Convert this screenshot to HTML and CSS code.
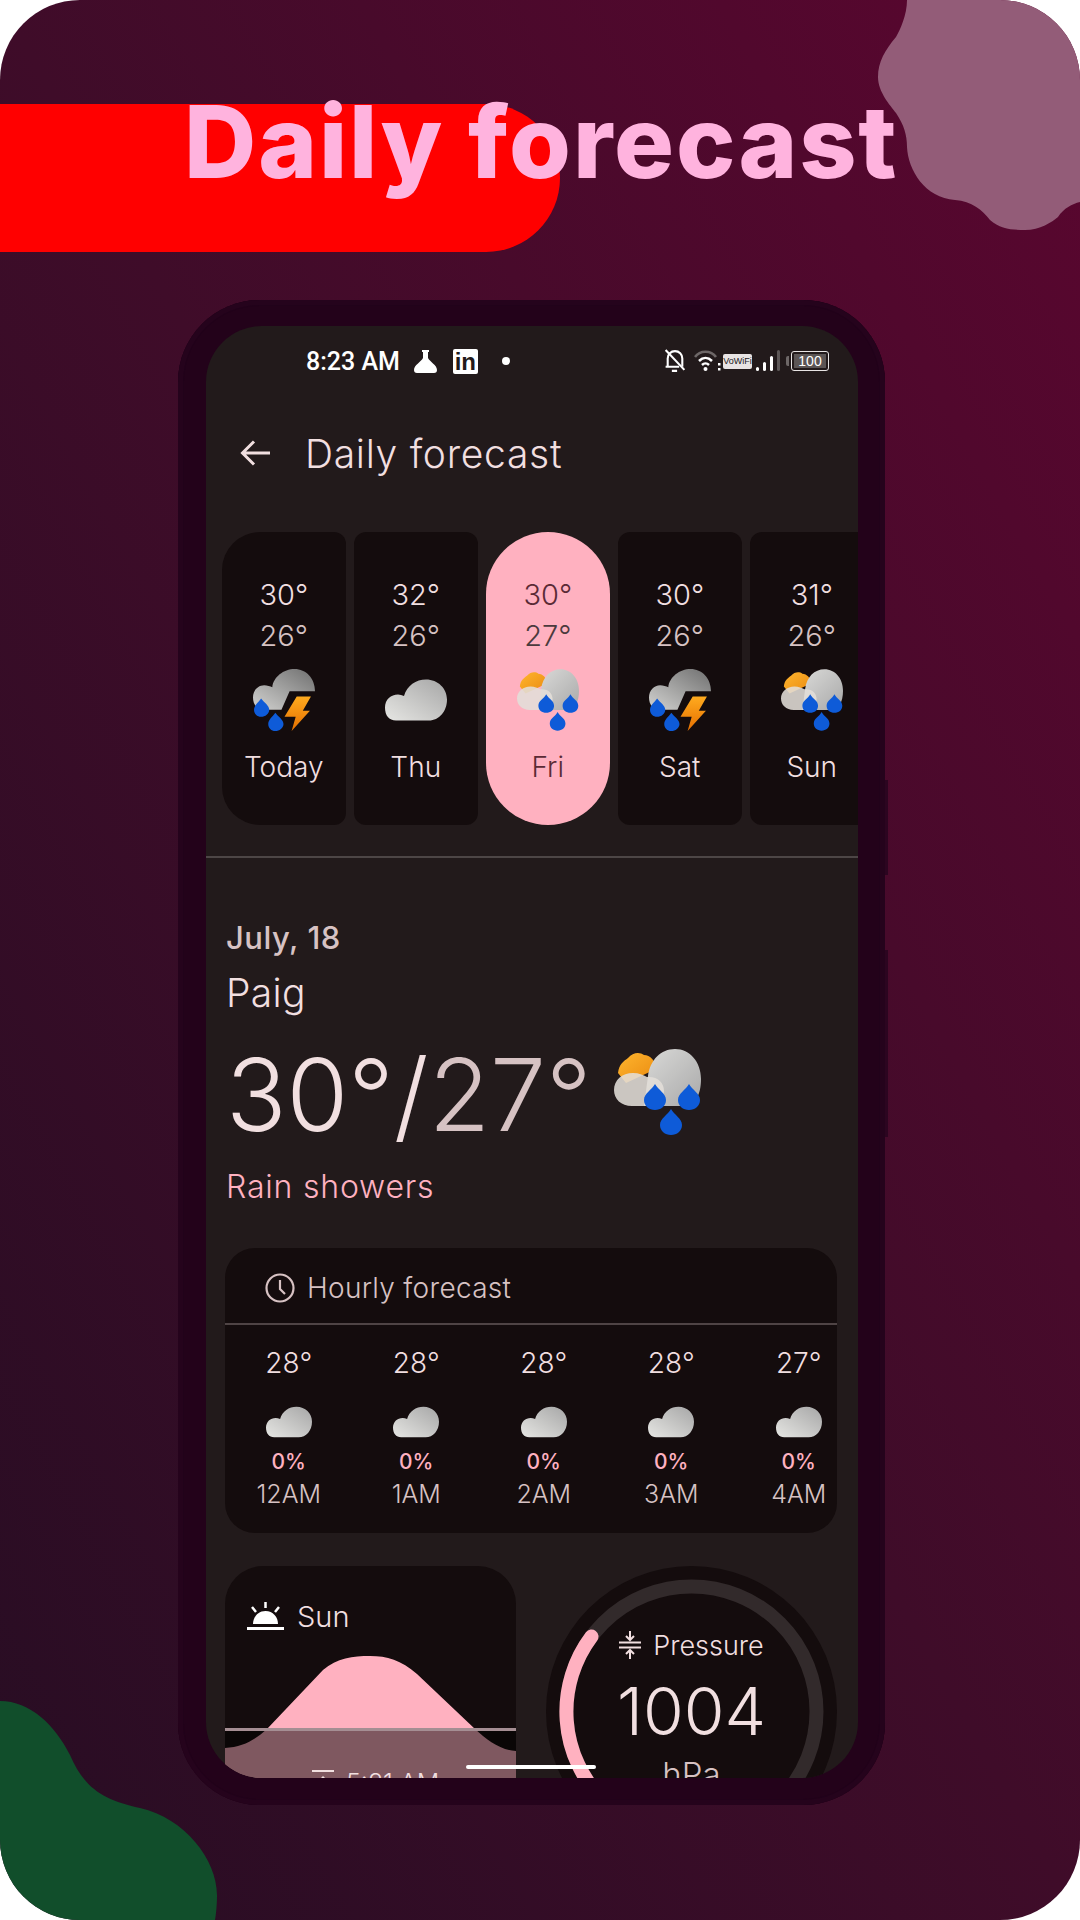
FILE: index.html
```html
<!DOCTYPE html>
<html>
    <head>
        <title>Daily forecast</title>
        <meta charset="UTF-8">
        <link rel="stylesheet" href="styles.css">
    </head>
    <body>
        <svg class="icon_defs">
            <defs>
                <linearGradient id="grad_light" x1="0" y1="1" x2="1" y2="0">
                    <stop offset="0" stop-color="#e6e6e3"/>
                    <stop offset="1" stop-color="#a6a6a6"/>
                </linearGradient>
                <linearGradient id="grad_dark" x1="0" y1="1" x2="1" y2="0">
                    <stop offset="0" stop-color="#d2d2d0"/>
                    <stop offset="1" stop-color="#6f6f6f"/>
                </linearGradient>
                <linearGradient id="grad_big" x1="0" y1="0" x2="1" y2="1">
                    <stop offset="0" stop-color="#dadad8"/>
                    <stop offset="1" stop-color="#a9a9a9"/>
                </linearGradient>
                <linearGradient id="grad_sun" x1="0" y1="0" x2="1" y2="1">
                    <stop offset="0" stop-color="#ffb52e"/>
                    <stop offset="1" stop-color="#e98a10"/>
                </linearGradient>
                <linearGradient id="grad_bolt" x1="0" y1="0" x2="0" y2="1">
                    <stop offset="0" stop-color="#ffab1f"/>
                    <stop offset="1" stop-color="#e56f00"/>
                </linearGradient>
                <symbol id="icon_cloud" viewBox="0 0 62 41">
                    <path fill="url(#grad_light)" d="M11 41C4 41 0 36 0 28C0 20 6 15 13 15C15 15 17 15.500 19 16.500C22 6 31 0 41 0C53 0 62 9 62 20C62 32 54 41 44 41Z"/>
                </symbol>
                <symbol id="icon_rain" viewBox="0 0 87 86">
                    <path fill="url(#grad_sun)" d="M4 24C5 15 10 12 14 9C19 3 26 3 30 6C36 6 42 12 42 20L12 34Z"/>
                    <path fill="url(#grad_big)" d="M34 27C36 11 47 0 61 0C76 0 87 13 87 30C87 46 81 57 70 57H30Z"/>
                    <path fill="#e2ded8" opacity=".88" d="M18 57C7 57 0 50 0 41C0 31 8 24 19 24C25 24 29 26 33 28C43 27 50 33 50 42C50 50 44 57 34 57Z"/>
                    <path fill="#0e5bd8" d="M41 35C38 41 30 44 30 51C30 57 35 61 41 61C47 61 52 57 52 51C52 44 44 41 41 35Z"/>
                    <path fill="#0e5bd8" d="M75 35C72 41 64 44 64 51C64 57 69 61 75 61C81 61 86 57 86 51C86 44 78 41 75 35Z"/>
                    <path fill="#0e5bd8" d="M57 60C54 66 46 69 46 76C46 82 51 86 57 86C63 86 68 82 68 76C68 69 60 66 57 60Z"/>
                </symbol>
                <symbol id="icon_storm" viewBox="0 0 61 61">
                    <path fill="url(#grad_dark)" d="M11 40C4 40 0 35 0 28C0 21 5 16 11 16C14 16 17 17 19 18C20 8 30 0 41 0C52 0 61 9 61 22H36L28 40Z"/>
                    <path fill="#0e5bd8" d="M8 29C5 33 1 36 1 40C1 44 4 47 8 47C12 47 16 44 16 40C16 36 11 33 8 29Z"/>
                    <path fill="#0e5bd8" d="M22 43C19 47 15 50 15 54C15 58 18 61 22 61C26 61 30 58 30 54C30 50 25 47 22 43Z"/>
                    <path fill="url(#grad_bolt)" d="M43 27H57L49 41H56L38 61L42 47H31Z"/>
                </symbol>
            </defs>
        </svg>

        <div class="slide">
            <svg class="blob_top" viewBox="878 0 202 230">
                <path fill="#935c78" d="M907 0C907 15 900 30 896 37C885 50 878 62 878 77C878 92 890 105 896 113C904 125 907 135 907 147C908 170 925 198 955 200C972 201 982 210 990 220C1000 229 1012 230 1025 230C1040 230 1052 222 1058 217C1064 208 1072 204 1080 202V0Z"/>
            </svg>
            <svg class="blob_bottom" viewBox="0 1701 217 219">
                <path fill="#114e2b" d="M0 1701C30 1701 55 1725 70 1755C85 1790 105 1800 140 1808C185 1818 217 1860 217 1895C217 1905 216 1915 215 1920H0Z"/>
            </svg>

            <div class="hero">
                <div class="hero_bar"></div>
                <h1 class="hero_title">Daily forecast</h1>
            </div>

            <div class="phone">
                <div class="side_btn side_btn_a"></div>
                <div class="side_btn side_btn_b"></div>
                <div class="screen">
                    <div class="status_bar">
                        <span class="status_time">8:23 AM</span>
                        <svg class="st_flask" viewBox="0 0 23 23"><path fill="#fff" d="M8 0H15V2H14V8C16 12 23 15 23 20C23 22 22 23 20 23H3C1 23 0 22 0 20C0 15 7 12 9 8V2H8Z"/></svg>
                        <span class="st_linkedin">in</span>
                        <span class="st_dot"></span>
                        <span class="status_gap"></span>
                        <svg class="st_bell" viewBox="1 1 20 23" fill="none" stroke="#fff" stroke-width="2"><path d="M4 18V10C4 6 7 3 11 3C15 3 18 6 18 10V18M2 18H15"/><path d="M2 2L20 21"/><path d="M8 22H13"/></svg>
                        <svg class="st_wifi" viewBox="0 0 27 22" fill="none"><path stroke="#6d6767" stroke-width="2.500" d="M1 7C6 0 17 0 22 7"/><path stroke="#fff" stroke-width="2.500" d="M5 11C9 7 14 7 18 11M8 15C10 13 13 13 15 15"/><circle cx="11.500" cy="19" r="2" fill="#fff"/><rect x="24" y="13" width="2.500" height="2.500" fill="#fff"/><rect x="24" y="18" width="2.500" height="2.500" fill="#fff"/></svg>
                        <span class="st_vowifi">VoWiFi</span>
                        <svg class="st_signal" viewBox="0 0 25 22"><rect x="1" y="17" width="3" height="4" rx="1.500" fill="#fff"/><rect x="8" y="12" width="3" height="9" rx="1.500" fill="#fff"/><rect x="15" y="6" width="3" height="15" rx="1.500" fill="#fff"/><rect x="22" y="0" width="3" height="21" rx="1.500" fill="#5d5757"/></svg>
                        <span class="st_battery"><span class="st_battery_num">100</span></span>
                    </div>

                    <div class="app_bar">
                        <svg class="back_icon" viewBox="0 0 30 26" fill="none" stroke="#f1dfe0" stroke-width="3"><path d="M30 13H3M14 1.500L2.500 13L14 24.500"/></svg>
                        <span class="app_title">Daily forecast</span>
                    </div>

                    <div class="days">
                        <div class="day day_first">
                            <div class="day_temp">30°</div>
                            <div class="day_temp day_low">26°</div>
                            <svg class="day_icon"><use href="#icon_storm"/></svg>
                            <div class="day_name">Today</div>
                        </div>
                        <div class="day">
                            <div class="day_temp">32°</div>
                            <div class="day_temp day_low">26°</div>
                            <svg class="day_icon day_icon_cloud"><use href="#icon_cloud"/></svg>
                            <div class="day_name">Thu</div>
                        </div>
                        <div class="day day_active">
                            <div class="day_temp">30°</div>
                            <div class="day_temp day_low">27°</div>
                            <svg class="day_icon"><use href="#icon_rain"/></svg>
                            <div class="day_name">Fri</div>
                        </div>
                        <div class="day">
                            <div class="day_temp">30°</div>
                            <div class="day_temp day_low">26°</div>
                            <svg class="day_icon"><use href="#icon_storm"/></svg>
                            <div class="day_name">Sat</div>
                        </div>
                        <div class="day">
                            <div class="day_temp">31°</div>
                            <div class="day_temp day_low">26°</div>
                            <svg class="day_icon"><use href="#icon_rain"/></svg>
                            <div class="day_name">Sun</div>
                        </div>
                    </div>

                    <div class="divider"></div>

                    <div class="summary">
                        <div class="sum_date">July, 18</div>
                        <div class="sum_place">Paig</div>
                        <div class="sum_temp">
                            <span class="sum_high">30°/</span><span class="sum_low">27°</span>
                            <svg class="sum_icon"><use href="#icon_rain"/></svg>
                        </div>
                        <div class="sum_cond">Rain showers</div>
                    </div>

                    <div class="hourly">
                        <div class="hourly_head">
                            <svg class="clock_icon" viewBox="0 0 30 30" fill="none" stroke="#d7c2c3" stroke-width="2.200"><circle cx="15" cy="15" r="13.500"/><path d="M15 7V16L20 21"/></svg>
                            <span>Hourly forecast</span>
                        </div>
                        <div class="hourly_row">
                            <div class="hour">
                                <div class="hour_temp">28°</div>
                                <svg class="hour_icon"><use href="#icon_cloud"/></svg>
                                <div class="hour_pop">0%</div>
                                <div class="hour_time">12AM</div>
                            </div>
                            <div class="hour">
                                <div class="hour_temp">28°</div>
                                <svg class="hour_icon"><use href="#icon_cloud"/></svg>
                                <div class="hour_pop">0%</div>
                                <div class="hour_time">1AM</div>
                            </div>
                            <div class="hour">
                                <div class="hour_temp">28°</div>
                                <svg class="hour_icon"><use href="#icon_cloud"/></svg>
                                <div class="hour_pop">0%</div>
                                <div class="hour_time">2AM</div>
                            </div>
                            <div class="hour">
                                <div class="hour_temp">28°</div>
                                <svg class="hour_icon"><use href="#icon_cloud"/></svg>
                                <div class="hour_pop">0%</div>
                                <div class="hour_time">3AM</div>
                            </div>
                            <div class="hour">
                                <div class="hour_temp">27°</div>
                                <svg class="hour_icon"><use href="#icon_cloud"/></svg>
                                <div class="hour_pop">0%</div>
                                <div class="hour_time">4AM</div>
                            </div>
                        </div>
                    </div>

                    <div class="bottom_row">
                        <div class="sun_card">
                            <div class="sun_head">
                                <svg class="sun_icon" viewBox="0 0 37 29"><path fill="#fff" d="M6 22C6 15 11 9 18.500 9C26 9 31 15 31 22Z"/><rect x="0" y="25" width="37" height="3" fill="#fff"/><path stroke="#fff" stroke-width="2.500" d="M18.500 0V6M5 5L9 10M32 5L28 10"/></svg>
                                <span>Sun</span>
                            </div>
                            <svg class="sun_chart" viewBox="0 0 291 207">
                                <path fill="#ffb1c0" d="M0 98C18 97 30 90 42 79L98 20C112 8 128 6 145 6C162 6 176 10 192 24L250 79C262 90 275 100 291 101V207H0Z"/>
                                <rect x="0" y="79" width="291" height="128" fill="#000" opacity=".5"/>
                                <rect x="0" y="78" width="291" height="3" fill="#a58e93"/>
                            </svg>
                            <div class="sun_time">
                                <svg class="rise_icon" viewBox="0 0 22 16"><rect x="0" y="0" width="22" height="2" fill="#f1dfe0"/><path fill="#f1dfe0" d="M11 6L17 12H5Z"/></svg>
                                <span>5:31 AM</span>
                            </div>
                        </div>
                        <div class="pressure">
                            <svg class="pressure_ring" viewBox="0 0 291 291" fill="none" stroke-width="14">
                                <circle cx="145.500" cy="145.500" r="125" stroke="#322a2b"/>
                                <path stroke="#ffb1c0" stroke-linecap="round" d="M57 234A125 125 0 0 1 45.500 70.500"/>
                            </svg>
                            <div class="pressure_head">
                                <svg class="pressure_icon" viewBox="0 0 22 28" fill="none" stroke="#f1dfe0" stroke-width="2"><path d="M0 11.500H22M0 16.500H22M11 0V8M7 5L11 9L15 5M11 28V20M7 23L11 19L15 23"/></svg>
                                <span>Pressure</span>
                            </div>
                            <div class="pressure_val">1004</div>
                            <div class="pressure_unit">hPa</div>
                        </div>
                    </div>

                    <div class="home_bar"></div>
                </div>
            </div>
        </div>
    </body>
</html>
```

FILE: styles.css
```css
html, body {
    margin: 0;
    padding: 0;
    background-color: #fff;
}
body {
    width: 1080px;
    height: 1920px;
    overflow: hidden;
    font-family: "Inter", "Noto Sans", sans-serif;
}
.icon_defs {
    position: absolute;
    width: 0;
    height: 0;
}
.slide {
    position: relative;
    width: 1080px;
    height: 1920px;
    border-radius: 80px;
    overflow: hidden;
    background: linear-gradient(to top right, #270d23, #3f0c29 50%, #5a062f);
}
.blob_top {
    position: absolute;
    right: 0;
    top: 0;
    width: 202px;
    height: 230px;
}
.blob_bottom {
    position: absolute;
    left: 0;
    bottom: 0;
    width: 217px;
    height: 219px;
}

.hero {
    position: relative;
    height: 300px;
}
.hero_bar {
    position: absolute;
    left: 0;
    top: 104px;
    width: 560px;
    height: 148px;
    border-radius: 0 74px 74px 0;
    background-color: #f00;
}
.hero_title {
    position: relative;
    margin: 0;
    padding: 82px 0 0 184px;
    font-size: 100px;
    line-height: 120px;
    font-weight: 800;
    letter-spacing: 1.900px;
    color: #ffb3de;
}

.phone {
    position: relative;
    box-sizing: border-box;
    width: 707px;
    height: 1505px;
    margin-left: 178px;
    padding: 26px 27px 27px 28px;
    border-radius: 82px;
    background-color: #23021a;
    box-shadow: inset 0 0 0 5px #25031c, inset 0 0 0 6px #21021a;
}
.side_btn {
    position: absolute;
    left: 707px;
    width: 3px;
    background-color: #2c0520;
}
.side_btn_a {
    top: 480px;
    height: 95px;
}
.side_btn_b {
    top: 650px;
    height: 187px;
}
.screen {
    position: relative;
    height: 1452px;
    border-radius: 56px;
    overflow: hidden;
    background-color: #221a1b;
}

.status_bar {
    display: flex;
    align-items: center;
    height: 70px;
    padding: 0 29px 0 100px;
    color: #fff;
}
.status_time {
    font-family: "Roboto", sans-serif;
    font-size: 25px;
    font-weight: 500;
}
.status_gap {
    flex: 1;
}
.st_flask {
    width: 23px;
    height: 23px;
    margin-left: 14px;
}
.st_linkedin {
    box-sizing: border-box;
    width: 25px;
    height: 25px;
    margin-left: 16px;
    border-radius: 2px;
    background-color: #fff;
    color: #221a1b;
    font-family: "Liberation Sans", sans-serif;
    font-size: 24px;
    line-height: 26px;
    font-weight: 700;
    text-align: center;
}
.st_dot {
    width: 8px;
    height: 8px;
    margin-left: 24px;
    border-radius: 50%;
    background-color: #fff;
}
.st_bell {
    width: 22px;
    height: 24px;
}
.st_wifi {
    width: 27px;
    height: 22px;
    margin-left: 8px;
}
.st_vowifi {
    width: 29px;
    height: 15px;
    margin-left: 2px;
    border-radius: 2px;
    background-color: #e8e4e4;
    color: #221a1b;
    font-family: "Liberation Sans", sans-serif;
    font-size: 9px;
    line-height: 15px;
    text-align: center;
    white-space: nowrap;
    overflow: hidden;
}
.st_signal {
    width: 25px;
    height: 22px;
    margin-left: 3px;
}
.st_battery {
    box-sizing: border-box;
    width: 38px;
    height: 20px;
    margin-left: 11px;
    padding: 2px;
    border: 1px solid #e8e4e4;
    border-radius: 3px;
    position: relative;
}
.st_battery::before {
    content: "";
    position: absolute;
    left: -6px;
    top: 4px;
    width: 3px;
    height: 10px;
    border-radius: 2px 0 0 2px;
    background-color: #6d6767;
}
.st_battery_num {
    display: block;
    height: 14px;
    background-color: #5b5555;
    color: #fff;
    font-family: "Liberation Sans", sans-serif;
    font-size: 14px;
    line-height: 14px;
    text-align: center;
}

.app_bar {
    display: flex;
    align-items: center;
    height: 114px;
    padding-left: 34px;
}
.back_icon {
    width: 30px;
    height: 26px;
}
.app_title {
    margin-left: 35px;
    font-size: 39px;
    font-weight: 300;
    letter-spacing: .7px;
    color: #f1dfe0;
}

.days {
    display: flex;
    gap: 8.500px;
    margin-top: 22px;
    padding-left: 16px;
    overflow: hidden;
}
.day {
    flex: 0 0 123.500px;
    display: flex;
    flex-direction: column;
    align-items: center;
    box-sizing: border-box;
    height: 293px;
    padding-top: 42px;
    border-radius: 12px;
    background-color: #140c0d;
    color: #f1dfe0;
}
.day_first {
    border-radius: 38px 12px 12px 38px;
}
.day_active {
    border-radius: 62px;
    background-color: #ffb1c0;
    color: #5a2a35;
}
.day_temp {
    font-size: 29px;
    line-height: 42px;
    font-weight: 300;
}
.day_low {
    margin-top: -1px;
    color: #d7c2c3;
}
.day_active .day_low {
    color: #4b3a3d;
}
.day_icon {
    width: 62px;
    height: 62px;
    margin-top: 12px;
}
.day_icon_cloud {
    margin-top: 22px;
    height: 42px;
    margin-bottom: 10px;
}
.day_name {
    margin-top: 15px;
    font-size: 28px;
    line-height: 42px;
    font-weight: 300;
}

.divider {
    height: 2px;
    margin-top: 31px;
    background-color: #4d4646;
}

.summary {
    padding: 60px 0 0 20px;
}
.sum_date {
    font-size: 31px;
    line-height: 40px;
    font-weight: 500;
    letter-spacing: .5px;
    color: #d7c2c3;
}
.sum_place {
    margin-top: 10px;
    font-size: 39px;
    line-height: 50px;
    font-weight: 300;
    letter-spacing: .3px;
    color: #f1dfe0;
}
.sum_temp {
    display: flex;
    align-items: center;
    height: 100px;
    margin-top: 25px;
    padding-top: 2px;
    font-size: 100px;
    line-height: 100px;
    font-weight: 300;
}
.sum_high {
    color: #f1dfe0;
}
.sum_low {
    color: #d6c2c3;
}
.sum_icon {
    width: 87px;
    height: 86px;
    margin: -6px 0 0 22px;
}
.sum_cond {
    margin-top: 22px;
    font-size: 32px;
    line-height: 40px;
    font-weight: 300;
    letter-spacing: .8px;
    color: #ffb1c0;
}

.hourly {
    width: 612px;
    height: 285px;
    margin: 41px 0 0 19px;
    border-radius: 30px;
    overflow: hidden;
    background-color: #140c0d;
}
.hourly_head {
    display: flex;
    align-items: center;
    box-sizing: border-box;
    height: 77px;
    padding: 4px 0 0 40px;
    border-bottom: 2px solid #4f4445;
    font-size: 28px;
    font-weight: 300;
    letter-spacing: .3px;
    color: #d7c2c3;
}
.clock_icon {
    width: 30px;
    height: 30px;
    margin-right: 12px;
}
.hourly_row {
    display: flex;
    padding-top: 20px;
}
.hour {
    flex: 0 0 127.500px;
    display: flex;
    flex-direction: column;
    align-items: center;
}
.hour_temp {
    font-size: 28px;
    line-height: 36px;
    font-weight: 300;
    color: #f1dfe0;
}
.hour_icon {
    width: 46px;
    height: 32px;
    margin-top: 25px;
}
.hour_pop {
    margin-top: 11px;
    font-size: 21px;
    line-height: 26px;
    font-weight: 500;
    color: #ffb1c0;
}
.hour_time {
    margin-top: 1px;
    font-size: 25px;
    line-height: 36px;
    font-weight: 300;
    color: #d7c2c3;
}

.bottom_row {
    display: flex;
    gap: 30px;
    margin: 33px 0 0 19px;
}
.sun_card {
    position: relative;
    box-sizing: border-box;
    width: 291px;
    height: 291px;
    padding-top: 36px;
    border-radius: 38px;
    overflow: hidden;
    background-color: #140c0d;
}
.sun_head {
    display: flex;
    align-items: center;
    height: 28px;
    padding-left: 22px;
    font-size: 29px;
    font-weight: 300;
    color: #f1dfe0;
}
.sun_icon {
    width: 37px;
    height: 29px;
    margin-right: 13px;
}
.sun_chart {
    display: block;
    width: 291px;
    height: 207px;
    margin-top: 20px;
}
.sun_time {
    position: absolute;
    left: 87px;
    top: 201px;
    display: flex;
    font-size: 25px;
    line-height: 32px;
    font-weight: 300;
    color: #f1dfe0;
}
.rise_icon {
    width: 22px;
    height: 16px;
    margin: 3px 12px 0 0;
}

.pressure {
    position: relative;
    display: flex;
    flex-direction: column;
    align-items: center;
    box-sizing: border-box;
    width: 291px;
    height: 291px;
    padding-top: 60px;
    border-radius: 50%;
    background-color: #140c0d;
    color: #f1dfe0;
}
.pressure_ring {
    position: absolute;
    left: 0;
    top: 0;
    width: 291px;
    height: 291px;
}
.pressure_head {
    position: relative;
    display: flex;
    align-items: center;
    height: 38px;
    font-size: 27px;
    font-weight: 300;
}
.pressure_icon {
    width: 22px;
    height: 28px;
    margin-right: 12px;
}
.pressure_val {
    position: relative;
    margin-top: 7px;
    font-size: 66px;
    line-height: 80px;
    font-weight: 300;
}
.pressure_unit {
    position: relative;
    margin-top: 3px;
    font-size: 33px;
    line-height: 40px;
    font-weight: 300;
    color: #d7c2c3;
}

.home_bar {
    position: absolute;
    left: 260px;
    bottom: 9px;
    width: 130px;
    height: 4px;
    border-radius: 2px;
    background-color: #fff;
}
```
